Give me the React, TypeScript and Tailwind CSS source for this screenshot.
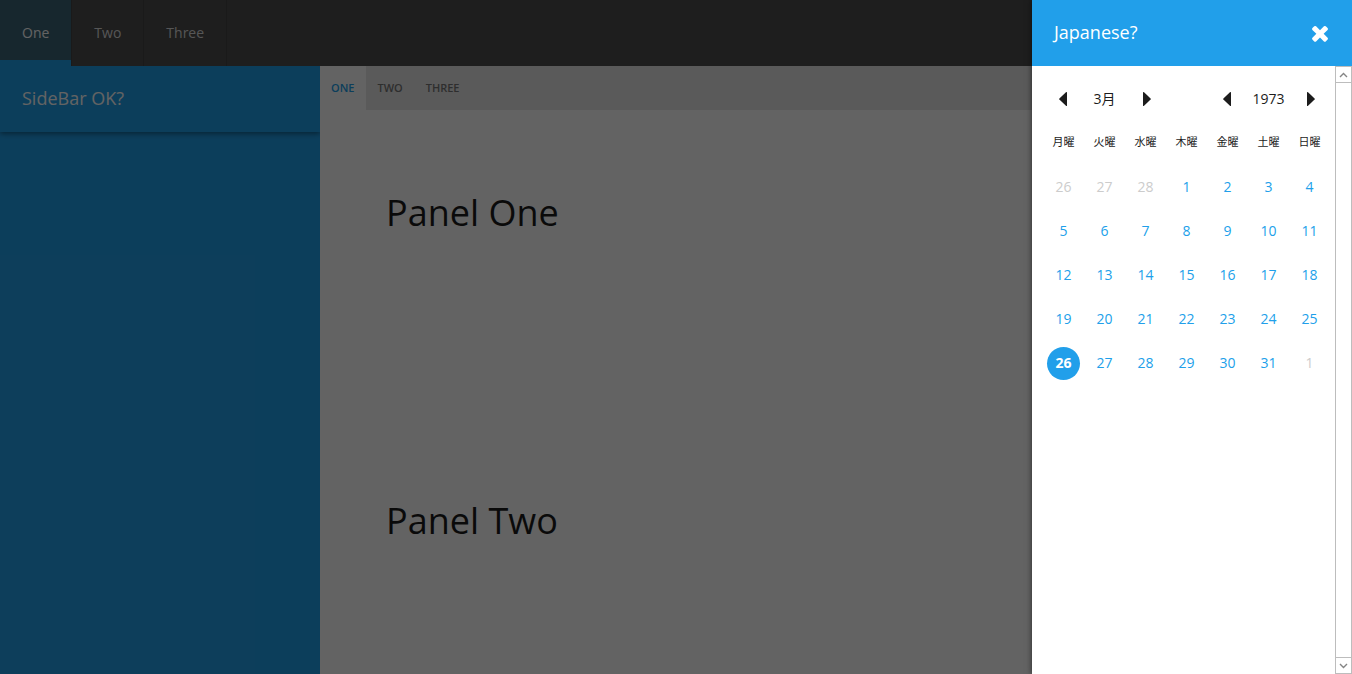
import React, { useState } from "react";

const MAIN_TABS = ["One", "Two", "Three"];
const PANEL_TABS = ["One", "Two", "Three"];
const PANELS = ["One", "Two"];
const WEEKDAYS = ["月曜", "火曜", "水曜", "木曜", "金曜", "土曜", "日曜"];

type Day = { day: number; outside: boolean };

function buildWeeks(year: number, month: number): Day[][] {
  const first = (new Date(year, month - 1, 1).getDay() + 6) % 7;
  const total = new Date(year, month, 0).getDate();
  const weeks = Math.ceil((first + total) / 7);
  return Array.from({ length: weeks }, (_, w) =>
    Array.from({ length: 7 }, (_, d) => {
      const offset = w * 7 + d - first + 1;
      return {
        day: new Date(year, month - 1, offset).getDate(),
        outside: offset < 1 || offset > total,
      };
    }),
  );
}

function Caret({ direction }: { direction: "left" | "right" }) {
  return (
    <svg className="h-4 w-2" viewBox="0 0 8 16" fill="currentColor" aria-hidden="true">
      <path
        d={
          direction === "left"
            ? "M8 1.6v12.8q0 .8-.8.5L.4 8.6Q0 8 .4 7.4L7.2 1.1Q8 .8 8 1.6z"
            : "M0 1.6v12.8q0 .8.8.5L7.6 8.6Q8 8 7.6 7.4L.8 1.1Q0 .8 0 1.6z"
        }
      />
    </svg>
  );
}

function Stepper({
  label,
  value,
  onStep,
}: {
  label: string;
  value: string;
  onStep: (by: number) => void;
}) {
  return (
    <div className="grid h-11 grid-cols-3 items-center text-sm text-[#1c1c1c]">
      <button
        type="button"
        aria-label={`Previous ${label}`}
        className="flex h-11 items-center justify-start pl-4"
        onClick={() => onStep(-1)}
      >
        <Caret direction="left" />
      </button>
      <span className="text-center whitespace-nowrap">{value}</span>
      <button
        type="button"
        aria-label={`Next ${label}`}
        className="flex h-11 items-center justify-end pr-[15px]"
        onClick={() => onStep(1)}
      >
        <Caret direction="right" />
      </button>
    </div>
  );
}

function Calendar() {
  const [year, setYear] = useState(1973);
  const [month, setMonth] = useState(3);
  const [selected, setSelected] = useState(26);

  const stepMonth = (by: number) => {
    const next = new Date(year, month - 1 + by, 1);
    setYear(next.getFullYear());
    setMonth(next.getMonth() + 1);
  };

  return (
    <div className="min-w-0 flex-1 pt-[11px] pr-[5px] pl-[11px]">
      <div className="grid grid-cols-[3fr_1fr_3fr]">
        <Stepper label="month" value={`${month}月`} onStep={stepMonth} />
        <span />
        <Stepper label="year" value={String(year)} onStep={(by) => setYear(year + by)} />
      </div>
      <table className="w-full table-fixed border-collapse text-center">
        <thead>
          <tr className="h-11">
            {WEEKDAYS.map((name) => (
              <th
                key={name}
                scope="col"
                className="p-0 pb-0.5 text-[11px] leading-4 font-normal whitespace-nowrap text-[#1c1c1c]"
              >
                {name}
              </th>
            ))}
          </tr>
        </thead>
        <tbody>
          {buildWeeks(year, month).map((week, w) => (
            <tr key={w} className="h-11">
              {week.map(({ day, outside }, d) => (
                <td key={d} className="p-0">
                  <button
                    type="button"
                    disabled={outside}
                    onClick={() => setSelected(day)}
                    className={
                      "mx-auto flex size-[33px] items-center justify-center rounded-full text-sm " +
                      (outside
                        ? "text-[#cccccc]"
                        : day === selected
                          ? "bg-[#219fea] font-bold text-white"
                          : "text-[#219fea]")
                    }
                  >
                    {day}
                  </button>
                </td>
              ))}
            </tr>
          ))}
        </tbody>
      </table>
    </div>
  );
}

function ScrollTrack() {
  return (
    <div className="flex w-[17px] shrink-0 flex-col border border-[#bdbdbd] bg-white text-[#858585]">
      <button
        type="button"
        aria-label="Scroll up"
        className="flex h-4 items-center justify-center border-b border-[#bdbdbd]"
      >
        <svg width="9" height="6" viewBox="0 0 9 6" fill="none" stroke="currentColor" strokeWidth="1.4" aria-hidden="true">
          <path d="M1 5l3.5-3.5L8 5" />
        </svg>
      </button>
      <div className="flex-1" />
      <button
        type="button"
        aria-label="Scroll down"
        className="flex h-4 items-center justify-center border-t border-[#bdbdbd]"
      >
        <svg width="9" height="6" viewBox="0 0 9 6" fill="none" stroke="currentColor" strokeWidth="1.4" aria-hidden="true">
          <path d="M1 1l3.5 3.5L8 1" />
        </svg>
      </button>
    </div>
  );
}

function Drawer({ onClose }: { onClose: () => void }) {
  return (
    <aside
      role="dialog"
      aria-label="Japanese?"
      className="absolute inset-y-0 right-0 flex w-80 flex-col bg-white shadow-[0_0_6px_rgba(0,0,0,0.6)]"
    >
      <header className="flex h-[66px] shrink-0 items-center justify-between bg-[#219fea] pr-5 pl-[22px] text-white">
        <h2 className="pb-0.5 text-lg">Japanese?</h2>
        <button type="button" aria-label="Close" onClick={onClose}>
          <svg className="size-6" viewBox="0 0 1792 1792" fill="currentColor" aria-hidden="true">
            <path d="M1490 1322q0 40-28 68l-136 136q-28 28-68 28t-68-28l-294-294-294 294q-28 28-68 28t-68-28l-136-136q-28-28-28-68t28-68l294-294-294-294q-28-28-28-68t28-68l136-136q28-28 68-28t68 28l294 294 294-294q28-28 68-28t68 28l136 136q28 28 28 68t-28 68l-294 294 294 294q28 28 28 68z" />
          </svg>
        </button>
      </header>
      <div className="flex min-h-0 flex-1">
        <Calendar />
        <ScrollTrack />
      </div>
    </aside>
  );
}

export default function App() {
  const [mainTab, setMainTab] = useState("One");
  const [panelTab, setPanelTab] = useState("One");
  const [open, setOpen] = useState(true);

  return (
    <div className="relative flex h-screen flex-col overflow-hidden bg-white font-['Open_Sans','Noto_Sans_CJK_JP',sans-serif] text-[#1c1c1c]">
      <nav className="flex h-[66px] shrink-0 bg-[#4d4d4d] text-sm">
        {MAIN_TABS.map((name) => (
          <button
            key={name}
            type="button"
            onClick={() => setMainTab(name)}
            className={
              "border-r border-[#454545] px-[22px] " +
              (name === mainTab
                ? "bg-[linear-gradient(to_top,#219fea_6px,#3d6678_6px)] text-white"
                : "text-[#dddddd]")
            }
          >
            {name}
          </button>
        ))}
      </nav>

      <div className="flex min-h-0 flex-1">
        <aside className="w-80 shrink-0 overflow-hidden bg-[#219fea]">
          <header className="flex h-[66px] items-center px-[22px] text-white shadow-[0_2px_5px_rgba(0,0,0,0.4)]">
            <h2 className="pb-0.5 text-lg">SideBar OK?</h2>
          </header>
        </aside>

        <main className="flex min-w-0 flex-1 flex-col">
          <nav className="flex h-11 shrink-0 bg-[#e8e8e8] text-[11px] font-semibold">
            {PANEL_TABS.map((name) => (
              <button
                key={name}
                type="button"
                onClick={() => setPanelTab(name)}
                className={
                  "pr-3 pl-[11px] uppercase " +
                  (name === panelTab ? "bg-white text-[#219fea]" : "text-[#777777]")
                }
              >
                {name}
              </button>
            ))}
          </nav>
          <div className="min-h-0 flex-1 overflow-hidden">
            {PANELS.map((name) => (
              <section key={name} className="h-[308px] px-[66px] pt-20">
                <h1 className="text-4xl leading-[46px]">Panel {name}</h1>
              </section>
            ))}
          </div>
        </main>
      </div>

      {open && (
        <>
          <div className="absolute inset-0 bg-black/61" />
          <Drawer onClose={() => setOpen(false)} />
        </>
      )}
    </div>
  );
}
